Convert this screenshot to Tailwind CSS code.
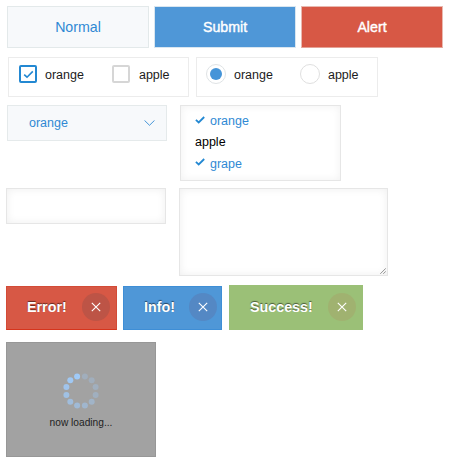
<!DOCTYPE html>
<html lang="en">
<head>
<meta charset="utf-8">
<title>Form components</title>
<script src="https://cdn.jsdelivr.net/npm/@tailwindcss/browser@4"></script>
</head>
<body class="w-[450px] h-[463px] overflow-hidden bg-white font-['Liberation_Sans',Arial,sans-serif] text-[12.5px] text-[#1c1c1c]">
<main class="flex flex-col items-start pl-[6px] pt-[6px]">
  <!-- Buttons -->
  <div class="flex h-[42px] pl-px">
    <button class="w-[142px] border border-[#e3e9ea] bg-[#f7f9fb] pt-[2px] text-[14.2px] text-[#3089d4]">Normal</button>
    <button class="ml-[5px] w-[142px] border border-[#d9e6f0] bg-[#4f97d7] pt-[2px] text-[14.2px] text-white [-webkit-text-stroke:0.4px_white]">Submit</button>
    <button class="ml-[5px] w-[142px] border border-[#e9b9b0] border-b-[#e4a195] bg-[#d75845] pt-[2px] text-[14.2px] text-white [-webkit-text-stroke:0.4px_white]">Alert</button>
  </div>

  <!-- Checkboxes and radios -->
  <div class="mt-[9px] flex h-[40px] gap-[7px] pl-[2px]">
    <div class="flex w-[181px] items-center border border-[#ececec] pl-[10px] pb-[6px]">
      <span class="flex size-[18px] items-center justify-center rounded-[2px] border-2 border-[#2388d2]">
        <svg class="size-[11px]" viewBox="0 0 11 11" fill="none" stroke="#2388d2" stroke-width="1.6"><path d="M1.2 5.6 4 8.2 9.8 2.4"/></svg>
      </span>
      <span class="ml-[8px] pt-[3px]">orange</span>
      <span class="ml-[28px] size-[18px] rounded-[2px] border-2 border-[#d6d6d6]"></span>
      <span class="ml-[9px] pt-[3px]">apple</span>
    </div>
    <div class="flex w-[182px] items-center border border-[#ececec] pl-[9px] pb-[6px]">
      <span class="flex size-[20px] items-center justify-center rounded-full border border-[#dfe3e5]">
        <span class="size-[12px] rounded-full bg-[#4594d8]"></span>
      </span>
      <span class="ml-[8px] pt-[3px]">orange</span>
      <span class="ml-[27px] size-[20px] rounded-full border border-[#dfdfdf]"></span>
      <span class="ml-[8px] pt-[3px]">apple</span>
    </div>
  </div>

  <!-- Select and list -->
  <div class="mt-[8px] flex h-[76px] items-start gap-[13px] pl-px">
    <div class="flex h-[36px] w-[160px] items-center justify-between border border-[#e5eaeb] bg-[#f7f9fb] pl-[21px] pr-[11px] text-[#3089d4]">
      <span>orange</span>
      <svg class="h-[6px] w-[11px]" viewBox="0 0 11 6" fill="none" stroke="#3089d4" stroke-width="0.9"><path d="M.5.4 5.5 5.3 10.5.4"/></svg>
    </div>
    <ul class="h-[76px] w-[161px] border border-[#e6e6e6] pl-[14px] pt-[5px] leading-[21px] shadow-[inset_0_0_8px_rgba(0,0,0,0.06)]">
      <li class="flex text-[#3089d4]">
        <svg class="mr-[5px] mt-[5px] h-[8px] w-[10px]" viewBox="0 0 10 8" fill="none" stroke="#2388d2" stroke-width="1.8"><path d="M.9 3.8 3.7 6.4 9.2 1"/></svg>orange
      </li>
      <li class="text-black">apple</li>
      <li class="flex pt-px text-[#3089d4]">
        <svg class="mr-[5px] mt-[4px] h-[8px] w-[10px]" viewBox="0 0 10 8" fill="none" stroke="#2388d2" stroke-width="1.8"><path d="M.9 3.8 3.7 6.4 9.2 1"/></svg>grape
      </li>
    </ul>
  </div>

  <!-- Text fields -->
  <div class="mt-[7px] flex h-[88px] items-start gap-[13px]">
    <input type="text" class="h-[36px] w-[160px] border border-[#e6e6e6] shadow-[inset_0_0_8px_rgba(0,0,0,0.07)]">
    <div class="flex h-[88px] w-[209px] items-end justify-end border border-[#e6e6e6] p-px shadow-[inset_0_0_8px_rgba(0,0,0,0.07)]">
      <svg class="size-[6px]" viewBox="0 0 6 6" fill="none" stroke="#777" stroke-width="0.8"><path d="M.3 5.8 5.8.3M3.3 5.8 5.8 3.3"/></svg>
    </div>
  </div>

  <!-- Notices -->
  <div class="mt-[9px] flex h-[45px] items-start text-[14.3px] font-bold text-white [text-shadow:0_-1px_1px_rgba(0,0,0,0.55)]">
    <div class="mt-px flex h-[44px] w-[111px] items-center justify-between border border-[#d34b37] border-b-[#d6341c] bg-[#d75845] pl-[20px] pr-[6px] pb-[2px]">
      <span class="pt-px">Error!</span>
      <span class="flex size-[28px] items-center justify-center rounded-full bg-[#bd5446]">
        <svg class="size-[10px]" viewBox="0 0 10 10" stroke="#fff" stroke-width="1.1"><path d="M.8.8 9.2 9.2M9.2.8.8 9.2"/></svg>
      </span>
    </div>
    <div class="ml-[6px] mt-px flex h-[44px] w-[99px] items-center justify-between border border-[#3e8ed6] bg-[#4f97d7] pl-[20px] pr-[4px] pb-[2px]">
      <span class="pt-px">Info!</span>
      <span class="flex size-[28px] items-center justify-center rounded-full bg-[#5488c4]">
        <svg class="size-[10px]" viewBox="0 0 10 10" stroke="#fff" stroke-width="1.1"><path d="M.8.8 9.2 9.2M9.2.8.8 9.2"/></svg>
      </span>
    </div>
    <div class="ml-[7px] flex h-[45px] w-[134px] items-center justify-between bg-[#9bc077] pl-[21px] pr-[7px] pb-[2px]">
      <span class="pt-[2px]">Success!</span>
      <span class="flex size-[28px] items-center justify-center rounded-full bg-[#a0b270]">
        <svg class="size-[10px]" viewBox="0 0 10 10" stroke="#fff" stroke-width="1.1"><path d="M.8.8 9.2 9.2M9.2.8.8 9.2"/></svg>
      </span>
    </div>
  </div>

  <!-- Loading panel -->
  <div class="mt-[12px] flex h-[115px] w-[150px] flex-col items-center border border-[#979797] bg-[#a2a2a2] pt-[30px]">
    <svg class="size-[36px]" viewBox="-18 -18 36 36" fill="#9fcaf8">
      <circle cx="-3.9" cy="-14.6" r="3"/>
      <circle cx="-10.7" cy="-10.7" r="3" opacity=".94"/>
      <circle cx="-14.6" cy="-3.9" r="3" opacity=".86"/>
      <circle cx="-14.6" cy="3.9" r="3" opacity=".76"/>
      <circle cx="-10.7" cy="10.7" r="3" opacity=".68"/>
      <circle cx="-3.9" cy="14.6" r="3" opacity=".6"/>
      <circle cx="3.9" cy="14.6" r="3" opacity=".52"/>
      <circle cx="10.7" cy="10.7" r="3" opacity=".44"/>
      <circle cx="14.6" cy="3.9" r="3" opacity=".34"/>
      <circle cx="14.6" cy="-3.9" r="3" opacity=".32"/>
      <circle cx="10.7" cy="-10.7" r="3" opacity=".3"/>
      <circle cx="3.9" cy="-14.6" r="3" opacity=".3"/>
    </svg>
    <span class="mt-[8px] text-[10.2px] leading-[12px] text-[#222]">now loading...</span>
  </div>
</main>
</body>
</html>
